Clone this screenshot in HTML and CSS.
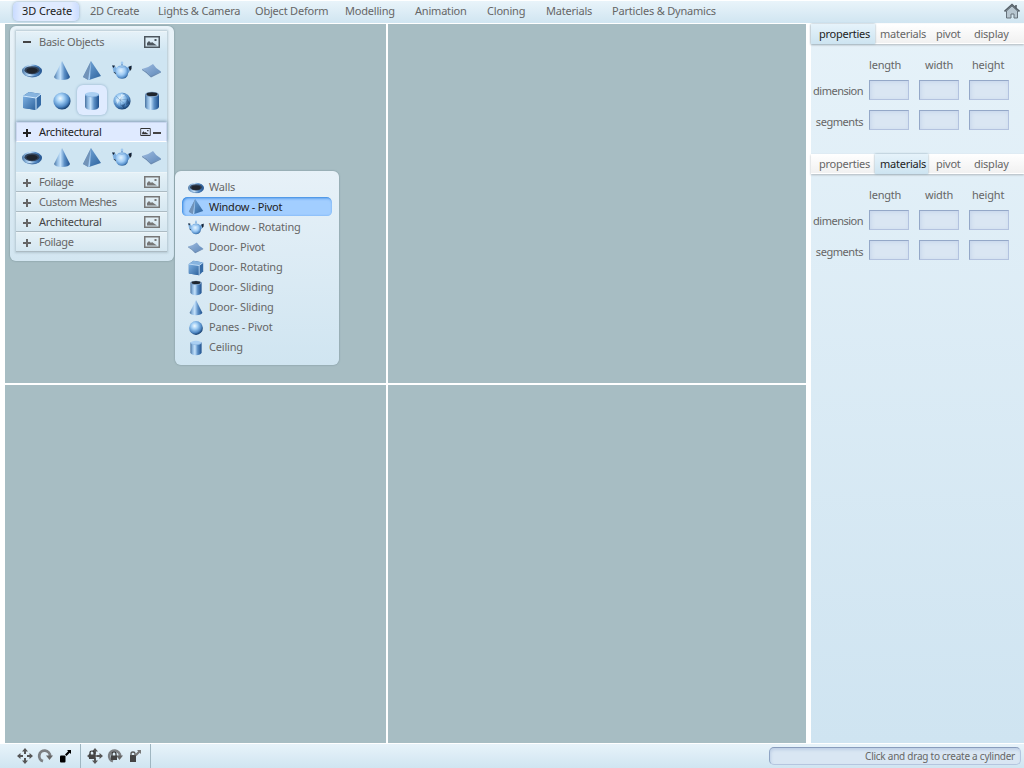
FILE: index.html
```html
<!DOCTYPE html>
<html lang="en">
<head>
<meta charset="utf-8">
<title>3D Create</title>
<link rel="stylesheet" href="styles.css">
</head>
<body>
<svg class="defs" aria-hidden="true">
  <defs>
    <linearGradient id="metal"><stop offset="0" stop-color="#47719f"/><stop offset=".2" stop-color="#8fb8df"/><stop offset=".4" stop-color="#c5e2fb"/><stop offset=".65" stop-color="#5b8fc6"/><stop offset="1" stop-color="#1e4f8c"/></linearGradient>
    <linearGradient id="flat" x1="0" y1="0" x2="1" y2="1"><stop offset="0" stop-color="#9dbbe0"/><stop offset="1" stop-color="#5e87b8"/></linearGradient>
    <linearGradient id="side" x1="0" y1="0" x2="1" y2="1"><stop offset="0" stop-color="#7db0e2"/><stop offset="1" stop-color="#2d629c"/></linearGradient>
    <radialGradient id="ball" cx=".4" cy=".35" r=".65"><stop offset="0" stop-color="#f0faff"/><stop offset=".35" stop-color="#a2cff5"/><stop offset=".75" stop-color="#5089c5"/><stop offset="1" stop-color="#163f70"/></radialGradient>
    <radialGradient id="pot" cx=".42" cy=".4" r=".65"><stop offset="0" stop-color="#e2f3ff"/><stop offset=".5" stop-color="#9ecbf5"/><stop offset=".8" stop-color="#5b93cd"/><stop offset="1" stop-color="#1c4f88"/></radialGradient>
    <symbol id="torus" viewBox="0 0 20 20"><ellipse cx="10" cy="10" rx="10" ry="6.500" fill="url(#metal)"/><path d="M1 12.500Q10 20 19 12.500Q16 15.500 10 15.500T1 12.500Z" fill="#355f92"/><ellipse cx="10" cy="9.200" rx="7.500" ry="4" fill="#31435b"/><ellipse cx="10" cy="9.600" rx="5.600" ry="2.800" fill="#20252d"/></symbol>
    <symbol id="cone" viewBox="0 0 20 20"><path d="M10 0L2 16Q3 19 10 19T18 16Z" fill="url(#metal)"/></symbol>
    <symbol id="pyramid" viewBox="0 0 20 20"><path d="M9 0L1 16 7 19 19 15Z" fill="url(#side)"/><path d="M9 0L1 16 6 19Z" fill="#7293b8"/><path d="M9 0L6 19 8 18.500Z" fill="#a9cdf0"/></symbol>
    <symbol id="teapot" viewBox="0 0 20 20"><path d="M0 4.500L3 5 5 8V14L1.500 11Z" fill="#7fb0df"/><path d="M14 8L17 5H20L18 10 14 14Z" fill="#7fb0df"/><path d="M0 4.500h3L1.500 7zM16.500 6l3-1.500V8l-1.500 2zM1.500 11l2 .5.5 2z" fill="#17212f"/><path d="M6.500 5Q10 3.500 13.500 5Q16.500 7 16.500 11Q16 15 13.500 17Q10 18.500 6.500 17Q4 15 3.500 11Q3.500 7 6.500 5Z" fill="url(#pot)"/><path d="M6.500 5.500Q10 7 13.500 5.500" fill="none" stroke="#78a8d8" stroke-width=".8"/><path d="M9 4.500V2h2v2.500z" fill="#7ea9d4"/><circle cx="10" cy="1.900" r="1.300" fill="#9fc8ef"/></symbol>
    <symbol id="plane" viewBox="0 0 20 20"><path d="M0 8Q6 7 11 3Q14 8 19 10.500Q14 13 9 16Q6 11 0 8Z" fill="url(#flat)"/><path d="M0 8Q6 11 9 15L19 10.500V11.500L9 16.500Q5 12 0 9Z" fill="#6b8bb2"/></symbol>
    <symbol id="cube" viewBox="0 0 20 20"><path d="M1 5L7 1 19 3V14L14 19 1 17Z" fill="#346aa5"/><path d="M1 5L14 7V19L1 17Z" fill="url(#side)"/><path d="M1 5L7 1 19 3 14 7Z" fill="#87b4df"/><path d="M1 5L14 7V19M14 7L19 3" stroke="#d3ebff" fill="none"/></symbol>
    <symbol id="sphere" viewBox="0 0 20 20"><circle cx="10" cy="10" r="8.600" fill="url(#ball)"/></symbol>
    <symbol id="geo" viewBox="0 0 20 20"><circle cx="10" cy="10" r="8.600" fill="url(#ball)"/><path d="M4 5L8 9 12 2 16 8 8 9 3 13 9 17 8 9 13 13 16 8 17 14 13 13 9 17" fill="none" stroke="#315f91" stroke-opacity=".5" stroke-width=".6"/><path d="M4 8L8 9 5 13zM9 3L13 4 9 7z" fill="#e2f3ff" fill-opacity=".8"/><path d="M15 8L18 12 14 14zM9 14L13 13 12 18z" fill="#153b68" fill-opacity=".55"/></symbol>
    <symbol id="cylinder" viewBox="0 0 20 20"><path d="M3 3V16Q4 19 10 19T17 16V3Z" fill="url(#metal)"/><ellipse cx="10" cy="3.500" rx="7" ry="2.500" fill="#aacff2"/><path d="M3 4Q10 8 17 4" fill="none" stroke="#7aa8d8" stroke-width=".6"/></symbol>
    <symbol id="tube" viewBox="0 0 20 20"><path d="M3 3V16Q4 19 10 19T17 16V3Z" fill="url(#metal)"/><ellipse cx="10" cy="3.600" rx="7" ry="2.800" fill="#7c9fc4"/><ellipse cx="10" cy="3.200" rx="5.500" ry="1.900" fill="#1f252d"/></symbol>
    <symbol id="image" viewBox="0 0 16 12"><path d="M.75.75h14.500v10.500H.75Z" fill="none" stroke="currentColor" stroke-width="1.500"/><path d="M3 9.500V7l2-2 2 2 1-1 2 1.500 3 2z" fill="currentColor"/><path d="M10.500 3h2v2h-2z" fill="currentColor"/></symbol>
    <symbol id="move" viewBox="0 0 16 16"><path d="M8 0l3 3.500H9V6H7V3.500H5zM8 16l-3-3.500h2V10h2v2.500h2zM0 8l3.500-3v2H6v2H3.500v2zM16 8l-3.500 3V9H10V7h2.500V5z" fill="#555"/></symbol>
    <symbol id="rotate" viewBox="0 0 16 16"><path d="M6 13.200A5.400 5.400 0 1 1 13 8" fill="none" stroke="#7c7f82" stroke-width="2.800"/><path d="M9 7.500h7L12.500 12z" fill="#666"/></symbol>
    <symbol id="lock" viewBox="0 0 8 10"><path d="M2 5V3Q2 1 4 1T6 3V5" fill="none" stroke="#333" stroke-width="1.200"/><path d="M1 4.500h6V9H1z" fill="#444"/></symbol>
  </defs>
</svg>
<div class="app">
  <header class="topbar">
    <nav class="menu">
      <a class="menu-item current">3D Create</a><a class="menu-item">2D Create</a><a class="menu-item">Lights &amp; Camera</a><a class="menu-item">Object Deform</a><a class="menu-item">Modelling</a><a class="menu-item">Animation</a><a class="menu-item">Cloning</a><a class="menu-item">Materials</a><a class="menu-item">Particles &amp; Dynamics</a>
    </nav>
    <svg class="home" viewBox="0 0 16 16"><path d="M2.500 8L8 3l5.500 5v7H10v-4H7v4H2.500z" fill="#b7c6d0" stroke="#66727b"/><path d="M.5 8.500L8 1.500l7.500 7M12 2v4" fill="none" stroke="#555f67" stroke-width="1.600"/></svg>
  </header>
  <main class="workspace">
    <section class="viewports"><div class="view"></div><div class="view"></div><div class="view"></div><div class="view"></div></section>
    <aside class="inspector">
      <section class="props">
        <div class="tabs"><span class="tab active">properties</span><span class="tab">materials</span><span class="tab">pivot</span><span class="tab">display</span></div>
        <div class="fields"><i></i><span class="col">length</span><span class="col mid">width</span><span class="col">height</span>
          <label>dimension</label><b></b><b></b><b></b><label>segments</label><b></b><b></b><b></b></div>
      </section>
      <section class="props">
        <div class="tabs"><span class="tab">properties</span><span class="tab active">materials</span><span class="tab">pivot</span><span class="tab">display</span></div>
        <div class="fields"><i></i><span class="col">length</span><span class="col mid">width</span><span class="col">height</span>
          <label>dimension</label><b></b><b></b><b></b><label>segments</label><b></b><b></b><b></b></div>
      </section>
    </aside>
    <div class="palette">
      <div class="palette-inner">
        <div class="group first"><span class="sign minus"></span><span class="name">Basic Objects</span><svg class="pic"><use href="#image"/></svg></div>
        <div class="shapes two">
          <span class="shape"><svg><use href="#torus"/></svg></span><span class="shape"><svg><use href="#cone"/></svg></span><span class="shape"><svg><use href="#pyramid"/></svg></span><span class="shape"><svg><use href="#teapot"/></svg></span><span class="shape"><svg><use href="#plane"/></svg></span>
          <span class="shape"><svg><use href="#cube"/></svg></span><span class="shape"><svg><use href="#sphere"/></svg></span><span class="shape picked"><svg><use href="#cylinder"/></svg></span><span class="shape"><svg><use href="#geo"/></svg></span><span class="shape"><svg><use href="#tube"/></svg></span>
        </div>
        <div class="group open"><span class="sign"></span><span class="name">Architectural</span><svg class="pic small" viewBox="0 0 16 12"><use href="#image"/></svg><span class="sign minus"></span></div>
        <div class="shapes">
          <span class="shape"><svg><use href="#torus"/></svg></span><span class="shape"><svg><use href="#cone"/></svg></span><span class="shape"><svg><use href="#pyramid"/></svg></span><span class="shape"><svg><use href="#teapot"/></svg></span><span class="shape"><svg><use href="#plane"/></svg></span>
        </div>
        <div class="group"><span class="sign"></span><span class="name">Foilage</span><svg class="pic"><use href="#image"/></svg></div>
        <div class="group"><span class="sign"></span><span class="name">Custom Meshes</span><svg class="pic"><use href="#image"/></svg></div>
        <div class="group"><span class="sign"></span><span class="name strong">Architectural</span><svg class="pic"><use href="#image"/></svg></div>
        <div class="group"><span class="sign"></span><span class="name">Foilage</span><svg class="pic"><use href="#image"/></svg></div>
      </div>
    </div>
    <ul class="flyout">
      <li><svg><use href="#torus"/></svg>Walls</li>
      <li class="selected"><svg><use href="#pyramid"/></svg>Window - Pivot</li>
      <li><svg><use href="#teapot"/></svg>Window - Rotating</li>
      <li><svg><use href="#plane"/></svg>Door- Pivot</li>
      <li><svg><use href="#cube"/></svg>Door- Rotating</li>
      <li><svg><use href="#tube"/></svg>Door- Sliding</li>
      <li><svg><use href="#cone"/></svg>Door- Sliding</li>
      <li><svg><use href="#sphere"/></svg>Panes - Pivot</li>
      <li><svg><use href="#cylinder"/></svg>Ceiling</li>
    </ul>
  </main>
  <footer class="statusbar">
    <div class="tools">
      <svg viewBox="0 0 16 16"><use href="#move"/></svg><svg viewBox="0 0 16 16"><use href="#rotate"/></svg><svg viewBox="0 0 16 16"><rect x="3" y="7.500" width="5.500" height="7" rx="1"/><path d="M10 2h4v4l-1.300-1.300L9.500 8 8 6.500l3.200-3.200z"/></svg>
    </div>
    <div class="tools locked">
      <svg viewBox="0 0 16 16"><use href="#move"/><path d="M8 3V13M4 8H12" stroke="#555" stroke-width="1.500"/><use href="#lock" x="1" y="2" width="8" height="10"/></svg><svg viewBox="0 0 16 16"><use href="#rotate"/><use href="#lock" x="3" y="3" width="8" height="10"/></svg><svg viewBox="0 0 16 16"><path d="M3 7h6v7H3z" fill="#444"/><path d="M4 8V5.500Q4 4 6 4T8 5.500V8" fill="none" stroke="#555" stroke-width="1.300"/><path d="M10 2h4v4l-1.300-1.300L9.500 8 8 6.500l3.200-3.200z" fill="#777"/></svg>
    </div>
    <div class="hint">Click and drag to create a cylinder</div>
  </footer>
</div>
</body>
</html>
```
FILE: styles.css
```css
* { box-sizing: border-box; }
body { margin: 0; font: 11px/20px "Noto Sans", "Open Sans", sans-serif; color: #666; letter-spacing: -0.2px; }
.defs { position: absolute; width: 0; height: 0; }
.app { width: 1024px; height: 768px; display: flex; flex-direction: column; overflow: hidden; background: #fff; white-space: nowrap; }
.topbar { height: 24px; flex: none; display: flex; justify-content: space-between; border-top: 1px solid #fff; border-bottom: 1px solid #fff; background: linear-gradient(#e9f4fa, #d0e5f1); }
.menu { display: grid; grid-template-columns: 68px 68px 97px 90px 70px 72px 59px 66px 120px; padding: 1px 0 0 22px; }
.menu-item { line-height: 17px; }
.menu-item.current { margin: 0 11px 2px -9px; padding-left: 9px; line-height: 17px; color: #222; letter-spacing: -0.1px; border-radius: 5px; background: linear-gradient(90deg, #c9dbff, #e0ebff 12%, #e0ebff 88%, #cbdcff); box-shadow: 0 0 3px #8fa6bf; }
.home { width: 16px; height: 16px; margin: 2px 4px 0 0; }
.workspace { height: 719px; flex: none; display: flex; position: relative; }
.viewports { width: 811px; padding: 0 5px; display: grid; grid-template-columns: 381px 418px; grid-template-rows: 359px 358px; gap: 2px; background: #fff; }
.view { background: #a7bdc3; }
.inspector { width: 213px; background: linear-gradient(#e6f2f9, #cfe4f1); }
.props { height: 130px; }
.tabs { height: 20px; display: grid; grid-template-columns: 64px 55px 39px 55px; letter-spacing: -0.25px; background: linear-gradient(#fff, #f1f1f1); border-bottom: 1px solid #fff; box-shadow: 0 1px 2px #b0b8be; }
.tab { padding-left: 8px; line-height: 20px; }
.tab:nth-child(2), .tab:nth-child(4) { padding-left: 5px; }
.tab:nth-child(3) { padding-left: 6px; }
.tab.active { color: #222; background: linear-gradient(#e6f3fb, #cde4f1); box-shadow: 0 0 2px #8eabbc; }
.tab.active:nth-child(2) { margin-right: 2px; }
.fields { display: grid; grid-template-columns: 48px 40px 40px 40px; grid-template-rows: 16px 20px 20px; gap: 10px; padding-top: 10px; }
.fields .col { line-height: 22px; }
.fields b { border: 1px solid #b3c2df; border-top-color: #94a8c8; border-left-color: #94a8c8; background: #dae6f3; box-shadow: inset 1px 1px 4px #c6d5eb; }
.fields label { text-align: right; line-height: 21px; letter-spacing: -0.5px; margin: 0 -4px 0 0; }
.fields label:nth-of-type(2) { line-height: 23px; letter-spacing: -0.45px; }
.fields .mid { margin-left: 6px; }
.fields .mid + .col { margin-left: 3px; }
.palette { position: absolute; left: 10px; top: 2px; width: 164px; height: 235px; padding: 5px 6px; border-radius: 6px; background: linear-gradient(#e9f3f9, #d3e6f1); box-shadow: 0 0 2px #6f8992; }
.palette-inner { width: 151px; height: 221px; background: #cfe5f1; box-shadow: 0 0 2px 1px #b3c6d0; }
.group { height: 20px; display: flex; align-items: center; padding: 0 7px 0 6px; border-bottom: 1px solid #acbbc3; border-top: 1px solid #edf5f9; background: linear-gradient(#e5f1f7, #d5e7f1); }
.group.first { height: 21px; padding-bottom: 1px; border-bottom: 0; background: linear-gradient(#e5f1f8, #cfe5f2); }
.sign { width: 9px; height: 9px; flex: none; margin-top: 1px; background: linear-gradient(#666, #666) center / 8px 2px no-repeat, linear-gradient(#666, #666) center / 2px 8px no-repeat; }
.sign.minus { background: linear-gradient(#444, #444) center / 8px 2px no-repeat; }
.name { flex: 1; padding-left: 8px; line-height: 18px; letter-spacing: -0.38px; }
.first .name, .name.strong, .open .name { letter-spacing: -0.25px; }
.name.strong { color: #444; }
.pic { width: 16px; height: 12px; color: #777; }
.first .pic { color: #4d565e; }
.pic.small { width: 11px; height: 8px; color: #333; margin-right: 1px; }
.open { color: #222; background: #dfeaff; border: 1px solid #c9d6ef; border-bottom-color: #fff; box-shadow: 0 -1px 3px #849eb6; padding: 0 5px; }
.open .sign:first-child { background: linear-gradient(#222, #222) center / 8px 2px no-repeat, linear-gradient(#222, #222) center / 2px 8px no-repeat; }
.shapes { height: 30px; display: grid; grid-template-columns: repeat(5, 30px); grid-auto-rows: 30px; padding-left: 1px; background: #cfe5f2; }
.shapes.two { height: 70px; padding-top: 3px; }
.shape { display: flex; align-items: center; justify-content: center; border-radius: 6px; }
.shape svg { width: 20px; height: 20px; margin-top: 1px; }
.shape.picked { background: #dfebff; box-shadow: 0 0 3px #8dacc8; }
.flyout { position: absolute; left: 175px; top: 147px; width: 164px; height: 194px; margin: 0; padding: 6px 7px; list-style: none; border-radius: 6px; background: linear-gradient(#e7f1f8, #d0e5f1); box-shadow: 0 0 2px #748b94; }
.flyout li { display: flex; align-items: center; height: 20px; padding-left: 6px; gap: 5px; }
.flyout svg { width: 16px; height: 16px; flex: none; margin-top: 1px; }
.flyout .selected { color: #222; letter-spacing: -0.25px; border-radius: 5px; background: #a2ceff; background-clip: padding-box; border-bottom: 1px solid transparent; box-shadow: inset 1px 1px 3px #287edc; }
.statusbar { height: 25px; flex: none; display: flex; align-items: center; border-top: 1px solid #fff; background: linear-gradient(#e7f3fa, #d0e5f1); }
.tools { display: flex; gap: 4px; width: 81px; height: 24px; padding-left: 17px; align-items: center; border-right: 1px solid #9fb6c1; }
.tools.locked { width: 70px; padding-left: 6px; }
.tools svg { width: 16px; height: 16px; }
.hint { margin: 0 3px 0 auto; width: 252px; height: 18px; font-size: 10px; letter-spacing: -0.25px; line-height: 16px; border: 1px solid #b5c5df; border-top-color: #899cbc; border-left-color: #8fa5c5; border-radius: 5px; background: #d9e6f3; box-shadow: inset 1px 2px 3px #bfd0e6; text-align: right; padding-right: 5px; }
```
